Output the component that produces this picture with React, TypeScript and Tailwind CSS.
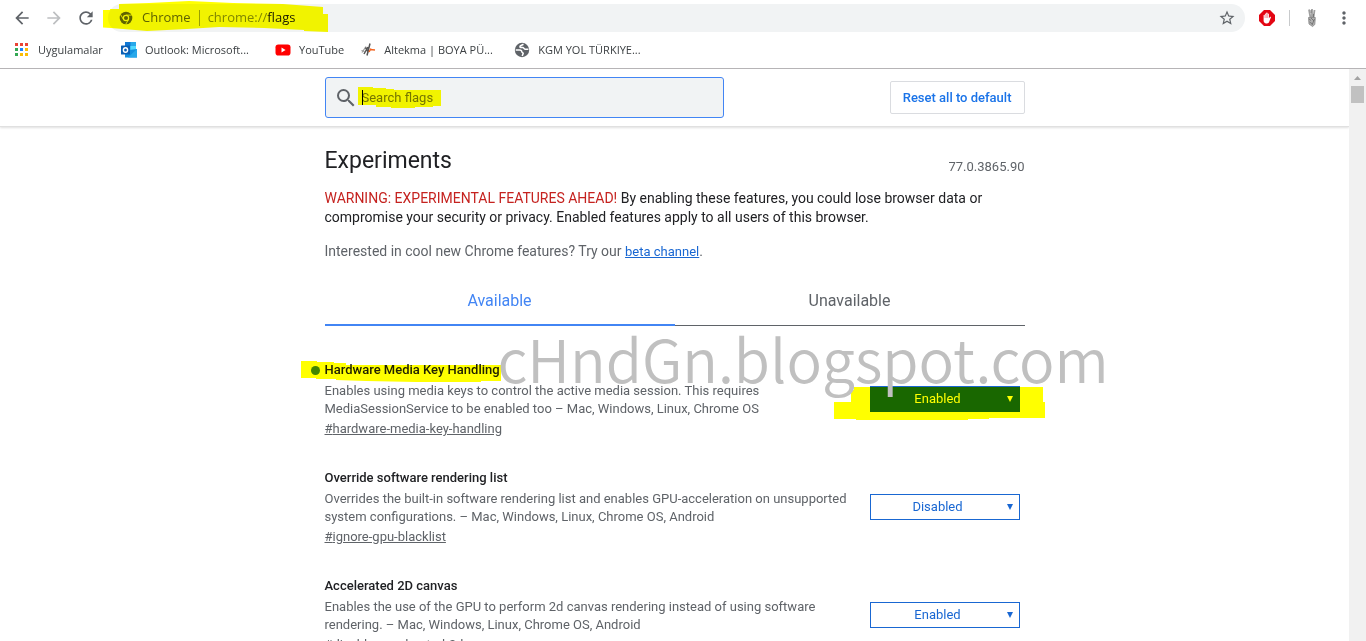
import type { ReactNode } from "react";
import {
  MdArrowBack,
  MdArrowForward,
  MdMoreVert,
  MdRefresh,
  MdSearch,
  MdStarBorder,
} from "react-icons/md";

type Flag = {
  id: string;
  name: string;
  description: string;
  value: string;
  marked?: boolean;
};

const flags: Flag[] = [
  {
    id: "hardware-media-key-handling",
    name: "Hardware Media Key Handling",
    description:
      "Enables using media keys to control the active media session. This requires MediaSessionService to be enabled too – Mac, Windows, Linux, Chrome OS",
    value: "Enabled",
    marked: true,
  },
  {
    id: "ignore-gpu-blacklist",
    name: "Override software rendering list",
    description:
      "Overrides the built-in software rendering list and enables GPU-acceleration on unsupported system configurations. – Mac, Windows, Linux, Chrome OS, Android",
    value: "Disabled",
  },
  {
    id: "disable-accelerated-2d-canvas",
    name: "Accelerated 2D canvas",
    description:
      "Enables the use of the GPU to perform 2d canvas rendering instead of using software rendering. – Mac, Windows, Linux, Chrome OS, Android",
    value: "Enabled",
  },
];

function AppsIcon() {
  const colors = [
    "#ea4335", "#ea4335", "#ea4335",
    "#34a853", "#1a84ff", "#fbbc05",
    "#34a853", "#fbbc05", "#fbbc05",
  ];
  return (
    <svg viewBox="0 0 16 16" className="size-4 shrink-0">
      {colors.map((c, i) => (
        <rect key={i} x={1 + (i % 3) * 5} y={1 + Math.floor(i / 3) * 5} width="3" height="3" fill={c} />
      ))}
    </svg>
  );
}

function OutlookIcon() {
  return (
    <svg viewBox="0 0 16 16" className="size-4 shrink-0">
      <path d="M4 0h11v9H4z" fill="#28a8ea" />
      <path d="M4 0h5.500v4H4z" fill="#0f78d4" />
      <path d="M9.500 4H15v4H9.500z" fill="#50d9ff" />
      <path d="M4 8.500 16 7v8.500H4z" fill="#1490df" />
      <path d="M16 7v8.500H7z" fill="#28a8ea" />
      <rect y="3.500" width="9" height="9" rx="0.600" fill="#0a5fb4" />
      <ellipse cx="4.500" cy="8" rx="2.100" ry="2.300" fill="none" stroke="#fff" strokeWidth="1.400" />
    </svg>
  );
}

function YouTubeIcon() {
  return (
    <svg viewBox="0 0 16 16" className="size-4 shrink-0">
      <rect x="0.500" y="2.500" width="15" height="11" rx="2.800" fill="#f00" />
      <path d="M6.500 5.600v4.800L10.600 8z" fill="#fff" />
    </svg>
  );
}

function AltekmaIcon() {
  return (
    <svg viewBox="0 0 16 16" className="size-4 shrink-0" fill="none">
      <path d="m2 10.500 4-6M1.500 8.500l3 1" stroke="#9a9a9a" strokeWidth="1.200" />
      <path d="m4 12 4-7M7 13.500l3-12M5.500 5.500l3 5" stroke="#555" strokeWidth="1.500" />
      <path d="m9 10 2-3.500M10 7.500l5 .5" stroke="#f26522" strokeWidth="1.500" />
    </svg>
  );
}

function GlobeIcon() {
  return (
    <svg viewBox="0 0 16 16" className="size-4 shrink-0">
      <circle cx="8" cy="8" r="7.200" fill="#5f6368" />
      <path
        d="M9.500 2.300 6.600 3.700c-1 .6-.8 1.700.2 1.900h2.200c1 .2.900 1.600 2 1.700h3.400M1.700 7.900h3.800c1.500 0 2.300 1 2.300 1.900 0 .8 1.300.8 1.400 1.500l-1 2.600"
        fill="none"
        stroke="#fff"
        strokeWidth="1.500"
      />
    </svg>
  );
}

function ChromeIcon() {
  return (
    <svg viewBox="0 0 16 16" className="size-[14px] shrink-0">
      <circle cx="8" cy="8" r="7.200" fill="#5f6368" />
      <circle cx="8" cy="8" r="3" fill="#5f6368" stroke="#f1f3f4" strokeWidth="1.400" />
      <path d="M8 4.700h6.500M5.100 9.700 1.900 4.200M10.900 9.700 7.800 15" stroke="#f1f3f4" strokeWidth="1" />
    </svg>
  );
}

function BlockerIcon() {
  return (
    <svg viewBox="0 0 16 16" className="size-4 shrink-0">
      <path d="M5 0h6l5 5v6l-5 5H5l-5-5V5z" fill="#e30613" />
      <path
        d="M4.600 8V5.300a.7.700 0 0 1 1.300 0V4a.7.700 0 0 1 1.300 0v-.7a.7.700 0 0 1 1.400 0V4a.7.700 0 0 1 1.300 0v4.300l1-1.200c.5-.5 1.300-.1 1 .5l-1.700 4.200c-.4 1-1.100 1.600-2.200 1.600H7.300c-1.700 0-2.700-1.200-2.700-2.900z"
        fill="#fff"
      />
      <path d="M6 4.500V8M7.300 4v4M8.600 4v4" stroke="#e30613" strokeWidth="0.350" />
    </svg>
  );
}

function HandIcon() {
  return (
    <svg viewBox="0 0 12 20" className="h-5 w-3 shrink-0" fill="none">
      <path d="M3 1.500 4.500 10M6 1v9M8.500 2 7.500 10" stroke="#a0a0a0" strokeWidth="1.800" />
      <path d="M2.500 9.500h6.800l-.5 7-2.200 2L3 16z" fill="#b0b0b0" stroke="#858585" strokeWidth="0.800" />
      <path d="m3 11 2 1.500M5 10l3 3M3.500 14l3 2M8.500 11 6 17M5 2v3M7.500 6v3" stroke="#6a6a6a" strokeWidth="0.800" />
    </svg>
  );
}

function Bookmark({ icon, children }: { icon: ReactNode; children: ReactNode }) {
  return (
    <a href="#" className="flex items-center gap-2 whitespace-nowrap">
      {icon}
      {children}
    </a>
  );
}

function Toolbar() {
  return (
    <header className="border-b border-[#b6b4b6] font-['Open_Sans',sans-serif] text-[#3c4043]">
      <div className="flex h-9 items-center px-3 text-[#5f6368]">
        <div className="flex w-24 shrink-0 gap-3">
          <button aria-label="Back"><MdArrowBack className="size-5" /></button>
          <button aria-label="Forward" className="text-[#bdbfc1]"><MdArrowForward className="size-5" /></button>
          <button aria-label="Reload"><MdRefresh className="size-5" /></button>
        </div>
        <div className="relative flex h-7 grow items-center rounded-full bg-[#f1f3f4] pr-[9px] pl-[11px] text-[13px]">
          <ChromeIcon />
          <span className="ml-[9px]">Chrome</span>
          <span className="mx-2 h-4 w-px bg-[#9aa0a6]" />
          <span className="grow">
            <span className="text-[#80868b]">chrome://</span>
            <span className="text-[#202124]">flags</span>
          </span>
          <button aria-label="Bookmark this page"><MdStarBorder className="size-[18px]" /></button>
          <svg viewBox="103 0 226 33" className="pointer-events-none absolute -top-1 -left-[5px] h-[33px] w-[226px] mix-blend-multiply">
            <path
              d="M103 10h7V9h9V4l30-1 40-2 44 2 50 1 40 3v7h5v18l-24-1v-1l-40-2-45-1-32 2-40 2-36-3-16-1h-15z"
              fill="#ff0"
            />
          </svg>
        </div>
        <div className="ml-[14px] flex shrink-0 items-center">
          <BlockerIcon />
          <span className="mr-4 ml-[14px] h-4 w-px bg-[#c8cacc]" />
          <HandIcon />
          <button aria-label="Menu" className="ml-4"><MdMoreVert className="size-5" /></button>
        </div>
      </div>
      <nav className="flex h-8 items-center gap-4 overflow-hidden px-[14px] pb-1 text-[11px]">
        <Bookmark icon={<AppsIcon />}>
          <span className="w-[67px]">Uygulamalar</span>
        </Bookmark>
        <Bookmark icon={<OutlookIcon />}>
          <span className="w-[114px]">Outlook: Microsoft...</span>
        </Bookmark>
        <Bookmark icon={<YouTubeIcon />}>YouTube</Bookmark>
        <Bookmark icon={<AltekmaIcon />}>
          <span className="w-[114px]">Altekma | BOYA PÜ...</span>
        </Bookmark>
        <Bookmark icon={<GlobeIcon />}>KGM YOL TÜRKIYE...</Bookmark>
      </nav>
    </header>
  );
}

function SearchBar() {
  return (
    <div className="border-b border-[#e0e0e0] shadow-[0_1px_2px_rgba(0,0,0,0.12)]">
      <div className="mx-auto flex h-[57px] w-full max-w-[700px] items-center justify-between">
        <label className="relative flex h-[41px] w-[399px] items-center rounded-[3px] border border-[#4285f4] bg-[#f1f3f4] pl-2">
          <MdSearch className="size-6 text-[#5f6368]" />
          <input
            type="text"
            aria-label="Search flags"
            placeholder="Search flags"
            className="ml-1 grow text-[13px] outline-none placeholder:text-[#757575]"
          />
          <span className="absolute left-9 h-[15px] w-px bg-black" />
          <svg viewBox="358 85 84 23" className="pointer-events-none absolute top-2 left-8 h-[23px] w-[84px] mix-blend-multiply">
            <path d="M358 86h15v1h13v1h8v1h47v16h-8v1h-18v1h-24v-1h-15v-2h-18z" fill="#ff0" />
          </svg>
        </label>
        <button className="h-[33px] rounded-[2px] border border-[#dadce0] px-3 text-[13px] font-medium text-[#1a73e8]">
          Reset all to default
        </button>
      </div>
    </div>
  );
}

function FlagRow({ flag }: { flag: Flag }) {
  return (
    <div className="flex items-center justify-between">
      <div className="w-[530px] text-[13px] leading-[18px] text-[#5f6368]">
        <h2 className="relative mb-[2px] leading-5 font-medium text-[#202124]">
          {flag.marked && (
            <span className="absolute top-[6px] -left-[14px] size-[9px] rounded-full bg-[#4285f4]" />
          )}
          {flag.name}
          {flag.marked && (
            <svg viewBox="301 360 201 22" className="pointer-events-none absolute top-0 -left-6 h-[22px] w-[201px] mix-blend-multiply">
              <path d="M301 361h16v1h17v1h12v2h155v16h-20v1h-65l-50-1-30-1v-1h-20v-1h-15z" fill="#ff0" />
            </svg>
          )}
        </h2>
        <p className="mb-[2px]">{flag.description}</p>
        <a href={`#${flag.id}`} className="block w-fit underline">
          #{flag.id}
        </a>
      </div>
      <div className="relative mr-[5px]">
        <select
          aria-label={flag.name}
          defaultValue={flag.value}
          className={`block h-[26px] w-[150px] appearance-none border border-[#1967d2] pr-[14px] text-center text-[13px] [text-align-last:center] ${
            flag.marked ? "bg-[#1967d2] text-white" : "bg-white text-[#1967d2]"
          }`}
        >
          <option>Default</option>
          <option>Enabled</option>
          <option>Disabled</option>
        </select>
        <svg viewBox="0 0 6 6" className={`pointer-events-none absolute top-[10px] right-[7px] size-[6px] ${flag.marked ? "text-white" : "text-[#1967d2]"}`}>
          <path d="M0 0h6L3 6z" fill="currentColor" />
        </svg>
        {flag.marked && (
          <svg viewBox="834 387 212 33" className="pointer-events-none absolute top-px -left-9 h-[33px] w-[212px] mix-blend-multiply">
            <path d="M854 387h189v15h2v16h-56v1h-21v1H856v-1h-22v-17h17v-12h3z" fill="#ff0" />
          </svg>
        )}
      </div>
    </div>
  );
}

export default function App() {
  return (
    <div className="flex h-screen flex-col overflow-hidden bg-white font-[Roboto,sans-serif]">
      <Toolbar />
      <div className="flex min-h-0 grow">
        <div className="min-w-0 grow overflow-hidden">
          <SearchBar />
          <main className="mx-auto w-full max-w-[700px] pt-[18px]">
            <div className="flex items-end justify-between">
              <h1 className="text-[23px] leading-8 text-[#202124]">Experiments</h1>
              <span className="text-[13px] leading-5 text-[#5f6368]">77.0.3865.90</span>
            </div>
            <p className="mt-3 text-sm leading-[19px] text-[#202124]">
              <span className="text-[#c5221f]">WARNING: EXPERIMENTAL FEATURES AHEAD!</span> By
              enabling these features, you could lose browser data or compromise your security or
              privacy. Enabled features apply to all users of this browser.
            </p>
            <p className="mt-[14px] text-sm leading-5 text-[#5f6368]">
              Interested in cool new Chrome features? Try our{" "}
              <a href="#" className="text-[13px] text-[#1967d2] underline">beta channel</a>.
            </p>
            <div role="tablist" className="mt-[15px] grid grid-cols-2 text-base">
              <button role="tab" aria-selected="true" className="h-[49px] border-b-2 border-[#4285f4] text-[#4285f4]">
                Available
              </button>
              <button role="tab" aria-selected="false" className="h-[49px] border-b border-[#5f6368] text-[#5f6368]">
                Unavailable
              </button>
            </div>
            <section className="relative mt-[34px] flex flex-col gap-[30px]">
              {flags.map((flag) => (
                <FlagRow key={flag.id} flag={flag} />
              ))}
              <div className="pointer-events-none absolute -top-[50px] left-[173px] font-['Noto_Sans_CJK_SC_DemiLight','Noto_Sans_CJK_SC',sans-serif] text-[59px] leading-[96px] font-[350] whitespace-nowrap text-[#c0c0c0]">
                cHndGn.blogspot.com
              </div>
            </section>
          </main>
        </div>
        {/* scrollbar */}
        <div className="flex w-[17px] shrink-0 flex-col items-center bg-[#f1f1f1]">
          <svg viewBox="0 0 17 17" className="size-[17px]">
            <path d="M5 11h7L8.500 7z" fill="#a3a3a3" />
          </svg>
          <div className="h-[17px] w-[13px] bg-[#c1c1c1]" />
        </div>
      </div>
    </div>
  );
}
